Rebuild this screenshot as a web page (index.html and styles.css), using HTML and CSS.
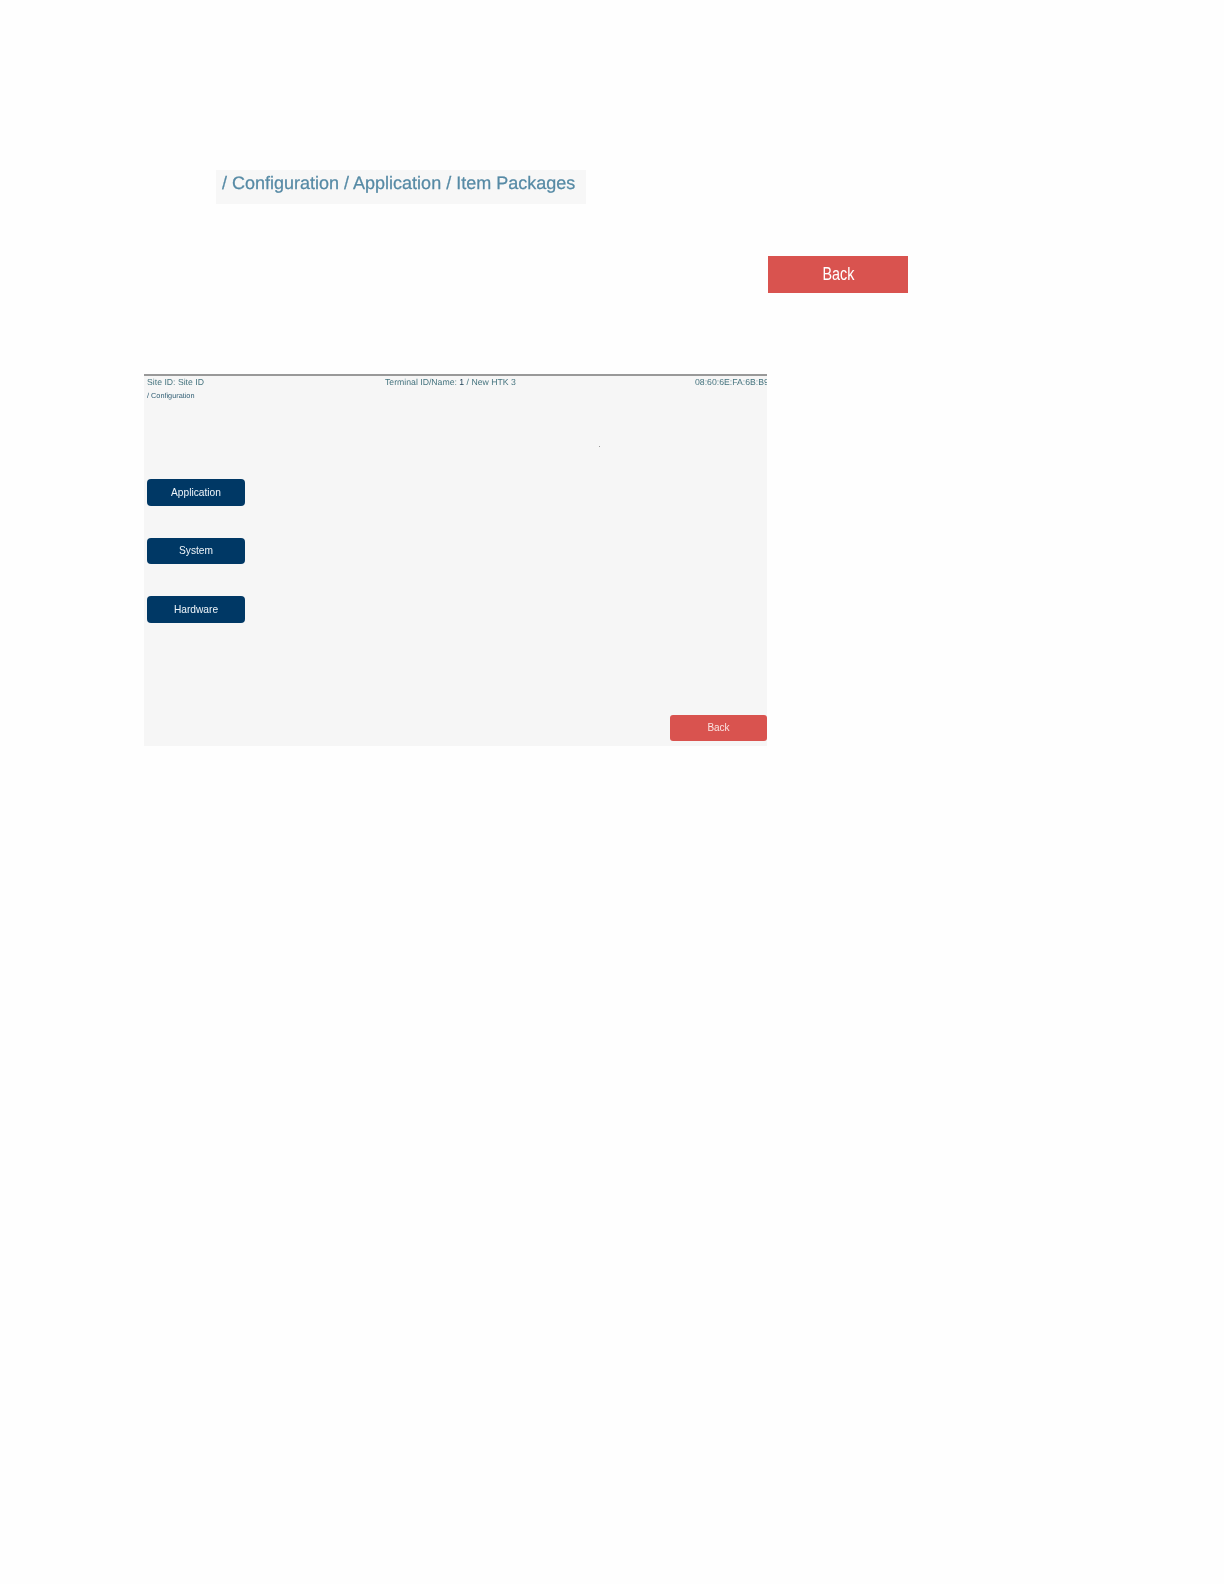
FILE: index.html
```html
<!DOCTYPE html>
<html lang="en">
<head>
<meta charset="utf-8">
<title>Item Packages</title>
<link rel="stylesheet" href="styles.css">
</head>
<body>
<main class="page">
  <div class="crumb-shot"><span class="crumb-text">/ Configuration / Application / Item Packages</span></div>
  <div class="back-row"><button class="back-large"><span class="back-large-label">Back</span></button></div>
  <section class="screen">
    <div class="status">
      <span class="status-site">Site ID: Site ID</span>
      <span class="status-terminal">Terminal ID/Name: <span class="status-num">1</span> / New HTK 3</span>
      <span class="status-mac">08:60:6E:FA:6B:B9</span>
    </div>
    <div class="path">/ Configuration</div>
    <div class="speck-row"><i class="speck"></i></div>
    <nav class="menu">
      <button class="menu-btn">Application</button>
      <button class="menu-btn">System</button>
      <button class="menu-btn">Hardware</button>
    </nav>
    <div class="footer"><button class="back-small">Back</button></div>
  </section>
</main>
</body>
</html>
```
FILE: styles.css
```css
* { box-sizing: border-box; }
html, body { margin: 0; padding: 0; background: #fefefe; }
body {
  height: 1584px; overflow: hidden;
  font-family: "Liberation Sans", Arial, sans-serif;
  text-rendering: geometricPrecision;
}
.page { padding: 170px 0 0 144px; }
.crumb-shot {
  margin-left: 72px; width: 370px; height: 34px;
  background: #f7f7f7; padding: 2px 0 0 6px;
}
.crumb-text {
  display: block; font-size: 18px; line-height: 22px; color: #568aa5;
  white-space: nowrap; filter: blur(0.5px);
  -webkit-text-stroke: 0.25px #568aa5;
}
.back-row { margin: 52px 0 0 624px; }
.back-large {
  display: block; width: 140px; height: 37px; border: 0; padding: 0;
  background: #d9534f; color: #fff;
  font-family: "Liberation Sans", Arial, sans-serif; font-size: 17.5px;
}
.back-large-label { display: inline-block; transform: scaleX(0.82); }
.screen {
  margin-top: 81px; width: 623px; height: 372px;
  background: #f6f6f6; border-top: 2px solid #999;
  display: flex; flex-direction: column; overflow: hidden;
}
.status {
  height: 12px; padding: 0 0 0 3px;
  display: flex; font-size: 8.7px; line-height: 12px; color: #46747f; white-space: nowrap;
  filter: blur(0.3px);
}
.status-site { width: 238px; }
.status-terminal { width: 310px; }
.status-num { color: #1d3f55; }
.status-mac { width: 72px; overflow: hidden; }
.path { margin: 3px 0 0 3px; font-size: 7.3px; line-height: 10px; color: #2f5d73; filter: blur(0.25px); }
.speck-row { height: 49px; padding: 45px 0 0 455px; }
.speck { display: block; width: 1px; height: 1px; background: #999; }
.menu { margin: 29px 0 0 3px; display: flex; flex-direction: column; gap: 32px; }
.menu-btn {
  width: 98px; height: 26.5px; border: 0; border-radius: 4px; padding: 0;
  background: #003865; color: #eef5fa;
  font-family: "Liberation Sans", Arial, sans-serif; font-size: 10.2px;
  filter: blur(0.3px);
}
.footer { margin-top: auto; margin-bottom: 5px; display: flex; justify-content: flex-end; }
.back-small {
  width: 97px; height: 26.5px; border: 0; border-radius: 3px; padding: 0;
  background: #d9534f; color: #fbe3e1;
  font-family: "Liberation Sans", Arial, sans-serif; font-size: 10px;
  filter: blur(0.3px);
}
```
